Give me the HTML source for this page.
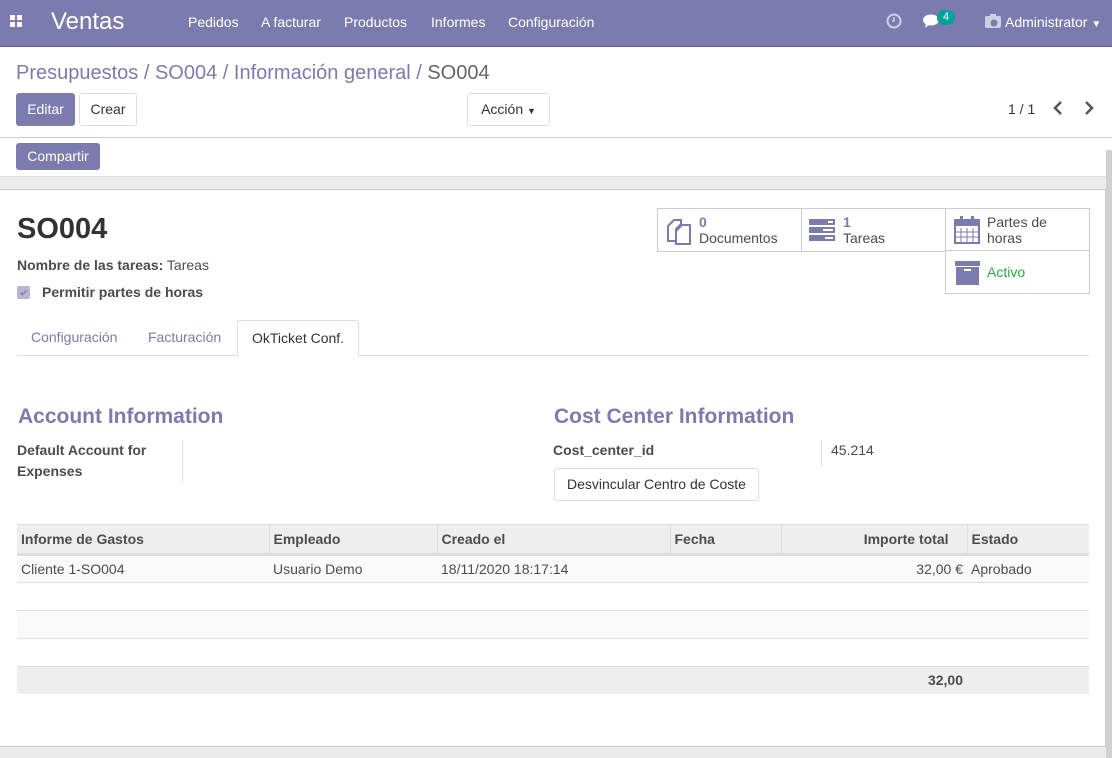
<!DOCTYPE html>
<html><head><meta charset="utf-8"><style>
*{box-sizing:border-box;margin:0;padding:0}
body{width:1112px;height:758px;overflow:hidden;font-family:"Liberation Sans",sans-serif;font-size:14px;color:#4c4c4c;background:#fff;position:relative}
.a{position:absolute}
.nav{left:0;top:0;width:1112px;height:47px;background:#7c7bad;border-bottom:1px solid #5e5d8c;color:#fff}
.btn{position:absolute;height:33px;border:1px solid #ddd;border-radius:3px;background:#fff;color:#333;font-size:14px;line-height:31px;text-align:center}
.pri{background:#7c7bad;border-color:#7c7bad;color:#fff}
.stat{position:absolute;border:1px solid #ccc;background:#fff;height:44px}
th,td{font-size:14px;text-align:left;padding:0 4px;white-space:nowrap}
</style></head><body>
<div class="a nav">
 <div class="a" style="left:10px;top:15px;width:12px;height:12px">
  <div class="a" style="left:0;top:0;width:5px;height:5px;background:#fff"></div><div class="a" style="left:7px;top:0;width:5px;height:5px;background:#fff"></div>
  <div class="a" style="left:0;top:7px;width:5px;height:5px;background:#fff"></div><div class="a" style="left:7px;top:7px;width:5px;height:5px;background:#fff"></div></div>
 <div class="a" style="left:51px;top:8px;font-size:24px">Ventas</div>
 <div class="a" style="left:188px;top:14px">Pedidos</div>
 <div class="a" style="left:261px;top:14px">A facturar</div>
 <div class="a" style="left:344px;top:14px">Productos</div>
 <div class="a" style="left:431px;top:14px">Informes</div>
 <div class="a" style="left:508px;top:14px">Configuración</div>
 <svg class="a" style="left:886px;top:13px" width="16" height="16"><circle cx="8" cy="8" r="6.5" fill="none" stroke="#cfcfe4" stroke-width="2"/><path d="M8 4v4h-2" stroke="#cfcfe4" stroke-width="1.5" fill="none"/></svg>
 <svg class="a" style="left:923px;top:14px" width="18" height="15"><ellipse cx="8" cy="6" rx="8" ry="5.5" fill="#fff"/><path d="M3 9l-1 5 5-4z" fill="#fff"/></svg>
 <div class="a" style="left:937px;top:10px;width:18px;height:15px;background:#00a09d;border-radius:8px;font-size:11px;text-align:center;line-height:15px">4</div>
 <svg class="a" style="left:985px;top:13px" width="17" height="16"><rect x="0" y="3" width="16" height="12" rx="2" fill="#cfcfe4"/><rect x="5" y="1" width="6" height="3" fill="#cfcfe4"/><circle cx="9" cy="10" r="3.5" fill="#7c7bad"/></svg>
 <div class="a" style="left:1005px;top:14px">Administrator <span style="font-size:10px">▼</span></div>
</div>
<div class="a" style="left:16px;top:62px;font-size:20px;color:#7c7bad">Presupuestos / SO004 / Información general / <span style="color:#666">SO004</span></div>
<div class="btn pri" style="left:16px;top:93px;width:59px">Editar</div>
<div class="btn" style="left:79px;top:93px;width:58px">Crear</div>
<div class="btn" style="left:467px;top:93px;width:83px">Acción <span style="font-size:9px">▼</span></div>
<div class="a" style="left:1008px;top:101px;color:#333">1 / 1</div>
<svg class="a" style="left:1053px;top:101px" width="10" height="14"><path d="M8 1L2 7l6 6" fill="none" stroke="#555" stroke-width="2.5"/></svg>
<svg class="a" style="left:1084px;top:101px" width="10" height="14"><path d="M2 1l6 6-6 6" fill="none" stroke="#555" stroke-width="2.5"/></svg>
<div class="a" style="left:0;top:137px;width:1112px;height:1px;background:#ccc"></div>
<div class="btn pri" style="left:16px;top:143px;width:84px;height:27px;line-height:25px">Compartir</div>
<div class="a" style="left:0;top:176px;width:1112px;height:582px;background:#ececec;border-top:1px solid #ddd"></div>
<div class="a" style="left:1106px;top:150px;width:6px;height:608px;background:#d0d0d0"></div>
<div class="a" style="left:0;top:189px;width:1106px;height:558px;background:#fff;border:1px solid #ccc;border-left:none"></div>
<div class="a" style="left:17px;top:213px;font-size:29px;font-weight:bold;color:#333">SO004</div>
<div class="a" style="left:17px;top:257px"><b>Nombre de las tareas:</b> Tareas</div>
<div class="a" style="left:17px;top:286px;width:13px;height:13px;background:#b8b7d3;border-radius:2px"></div>
<svg class="a" style="left:19px;top:288px" width="9" height="9"><path d="M1.5 4.5l2 2 4-4" fill="none" stroke="#7c7bad" stroke-width="1.3"/></svg>
<div class="a" style="left:42px;top:284px;font-weight:bold">Permitir partes de horas</div>
<div class="stat" style="left:657px;top:208px;width:145px"><svg class="a" style="left:8px;top:8px" width="26" height="28"><path d="M2 9l6-6h7v4l-5 5v12H2z" fill="none" stroke="#7c7bad" stroke-width="2"/><path d="M10 14l6-6h8v19H10z" fill="#fff" stroke="#7c7bad" stroke-width="2"/></svg><div class="a" style="left:41px;top:5px;line-height:16px"><b style="color:#7c7bad">0</b><br>Documentos</div></div>
<div class="stat" style="left:801px;top:208px;width:145px"><svg class="a" style="left:7px;top:10px" width="27" height="22"><rect x="0" y="0" width="26" height="6" fill="#7c7bad"/><rect x="0" y="8" width="26" height="6" fill="#7c7bad"/><rect x="0" y="16" width="26" height="6" fill="#7c7bad"/><rect x="19" y="2" width="5" height="2" fill="#fff"/><rect x="14" y="10" width="10" height="2" fill="#fff"/><rect x="16" y="18" width="8" height="2" fill="#fff"/></svg><div class="a" style="left:41px;top:5px;line-height:16px"><b style="color:#7c7bad">1</b><br>Tareas</div></div>
<div class="stat" style="left:945px;top:208px;width:145px"><svg class="a" style="left:8px;top:7px" width="26" height="28"><rect x="1" y="4" width="24" height="23" fill="none" stroke="#7c7bad" stroke-width="2"/><rect x="1" y="4" width="24" height="6" fill="#7c7bad"/><path d="M7 12v14M13 12v14M19 12v14M2 16h22M2 21h22" stroke="#7c7bad"/><rect x="6" y="0" width="3" height="7" fill="#7c7bad"/><rect x="17" y="0" width="3" height="7" fill="#7c7bad"/></svg><div class="a" style="left:41px;top:5px;line-height:16px">Partes de<br>horas</div></div>
<div class="stat" style="left:945px;top:250px;width:145px"><svg class="a" style="left:9px;top:10px" width="25" height="24"><rect x="0" y="0" width="25" height="5" fill="#7c7bad"/><rect x="1" y="6" width="23" height="18" fill="#7c7bad"/><rect x="9" y="8" width="7" height="2" fill="#fff"/></svg><div class="a" style="left:41px;top:13px;color:#28a745">Activo</div></div>
<div class="a" style="left:17px;top:355px;width:1072px;height:1px;background:#ddd"></div>
<div class="a" style="left:31px;top:329px;color:#7c7bad">Configuración</div>
<div class="a" style="left:148px;top:329px;color:#7c7bad">Facturación</div>
<div class="a" style="left:237px;top:320px;width:122px;height:36px;border:1px solid #ddd;border-bottom:1px solid #fff;background:#fff;border-radius:3px 3px 0 0;color:#333;padding:9px 0 0 14px">OkTicket Conf.</div>
<div class="a" style="left:18px;top:405px;font-size:21px;font-weight:bold;color:#7c7bad">Account Information</div>
<div class="a" style="left:554px;top:405px;font-size:21px;font-weight:bold;color:#7c7bad">Cost Center Information</div>
<div class="a" style="left:17px;top:440px;font-weight:bold;line-height:21px">Default Account for<br>Expenses</div>
<div class="a" style="left:182px;top:440px;width:1px;height:42px;background:#ddd"></div>
<div class="a" style="left:553px;top:442px;font-weight:bold">Cost_center_id</div>
<div class="a" style="left:821px;top:440px;width:1px;height:26px;background:#ddd"></div>
<div class="a" style="left:831px;top:442px">45.214</div>
<div class="btn" style="left:554px;top:468px;width:205px;color:#333">Desvincular Centro de Coste</div>
<table class="a" style="left:17px;top:524px;width:1072px;border-collapse:collapse">
<tr style="background:#eee;height:30px;border-top:1px solid #ddd;border-bottom:3px solid #ddd;font-weight:bold"><th style="width:252px;border-right:1px solid #ddd">Informe de Gastos</th><th style="width:168px;border-right:1px solid #ddd">Empleado</th><th style="width:233px;border-right:1px solid #ddd">Creado el</th><th style="width:111px;border-right:1px solid #ddd">Fecha</th><th style="width:186px;text-align:right;padding-right:18px;border-right:1px solid #ddd">Importe total</th><th>Estado</th></tr>
<tr style="height:28px;background:#fafafa;border-bottom:1px solid #ddd"><td>Cliente 1-SO004</td><td>Usuario Demo</td><td>18/11/2020 18:17:14</td><td></td><td style="text-align:right">32,00 €</td><td>Aprobado</td></tr>
<tr style="height:28px;border-bottom:1px solid #ddd"><td colspan="6"></td></tr>
<tr style="height:28px;background:#fafafa;border-bottom:1px solid #ddd"><td colspan="6"></td></tr>
<tr style="height:28px;border-bottom:1px solid #ddd"><td colspan="6"></td></tr>
<tr style="height:27px;background:#eee;font-weight:bold"><td colspan="4"></td><td style="text-align:right;padding-right:4px">32,00</td><td></td></tr>
</table>
</body></html>
